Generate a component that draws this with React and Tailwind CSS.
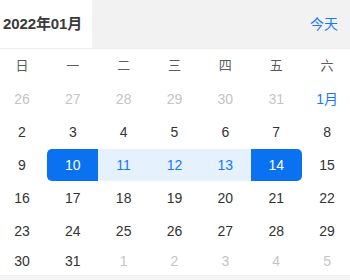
import React from "react";

const weekdays = ["日", "一", "二", "三", "四", "五", "六"];

// each day: [label, kind] kind: "muted" | "month" | "start" | "mid" | "end"
const weeks = [
  [["26", "muted"], ["27", "muted"], ["28", "muted"], ["29", "muted"], ["30", "muted"], ["31", "muted"], ["1月", "month"]],
  [["2"], ["3"], ["4"], ["5"], ["6"], ["7"], ["8"]],
  [["9"], ["10", "start"], ["11", "mid"], ["12", "mid"], ["13", "mid"], ["14", "end"], ["15"]],
  [["16"], ["17"], ["18"], ["19"], ["20"], ["21"], ["22"]],
  [["23"], ["24"], ["25"], ["26"], ["27"], ["28"], ["29"]],
  [["30"], ["31"], ["1", "muted"], ["2", "muted"], ["3", "muted"], ["4", "muted"], ["5", "muted"]],
];

function DayCell({ label, kind, last }) {
  let cls = "text-[#333333]";
  if (kind === "muted") cls = "text-[#c4c4c4]";
  if (kind === "month") cls = "text-[#1677ff]";
  if (kind === "start") cls = "bg-[#0a72f0] text-white rounded-l-[5px]";
  if (kind === "end") cls = "bg-[#0a72f0] text-white rounded-r-[5px]";
  if (kind === "mid") cls = "bg-[#e6f1fe] text-[#1677ff]";
  return (
    <div className={last ? "h-[28px] pt-[1px]" : "h-[33px] pt-[1px]"}>
      <div className={`${last ? "h-[27px]" : "h-[32px]"} flex items-center justify-center text-[14px] ${cls}`}>
        {label}
      </div>
    </div>
  );
}

export default function App() {
  return (
    <div
      className="w-[350px] h-[280px] overflow-hidden bg-white flex flex-col"
      style={{ fontFamily: '"Liberation Sans", "Noto Sans CJK SC", sans-serif' }}
    >
      {/* header */}
      <div className="flex h-[49px] shrink-0 border-b border-[#eeeeee]">
        <div className="w-[92px] bg-white flex items-center pl-[3px]">
          <span className="text-[15px] font-bold text-[#3a3a3a] tracking-[-0.1px]">2022年01月</span>
        </div>
        <div className="flex-1 bg-[#f2f2f2] flex items-center justify-end pr-[12px]">
          <span className="text-[14px] text-[#1677ff]">今天</span>
        </div>
      </div>

      <div className="w-[356px] -ml-[3.5px] shrink-0">
        <div className="grid grid-cols-7 h-[33px] items-center">
          {weekdays.map((w) => (
            <div key={w} className="text-center text-[13px] text-[#5c5c5c]">
              {w}
            </div>
          ))}
        </div>
        {weeks.map((week, i) => (
          <div key={i} className="grid grid-cols-7">
            {week.map(([label, kind], j) => (
              <DayCell key={j} label={label} kind={kind} last={i === weeks.length - 1} />
            ))}
          </div>
        ))}
      </div>
      <div className="flex-1 bg-[#f5f5f5] border-t border-[#efefef]" />
    </div>
  );
}
